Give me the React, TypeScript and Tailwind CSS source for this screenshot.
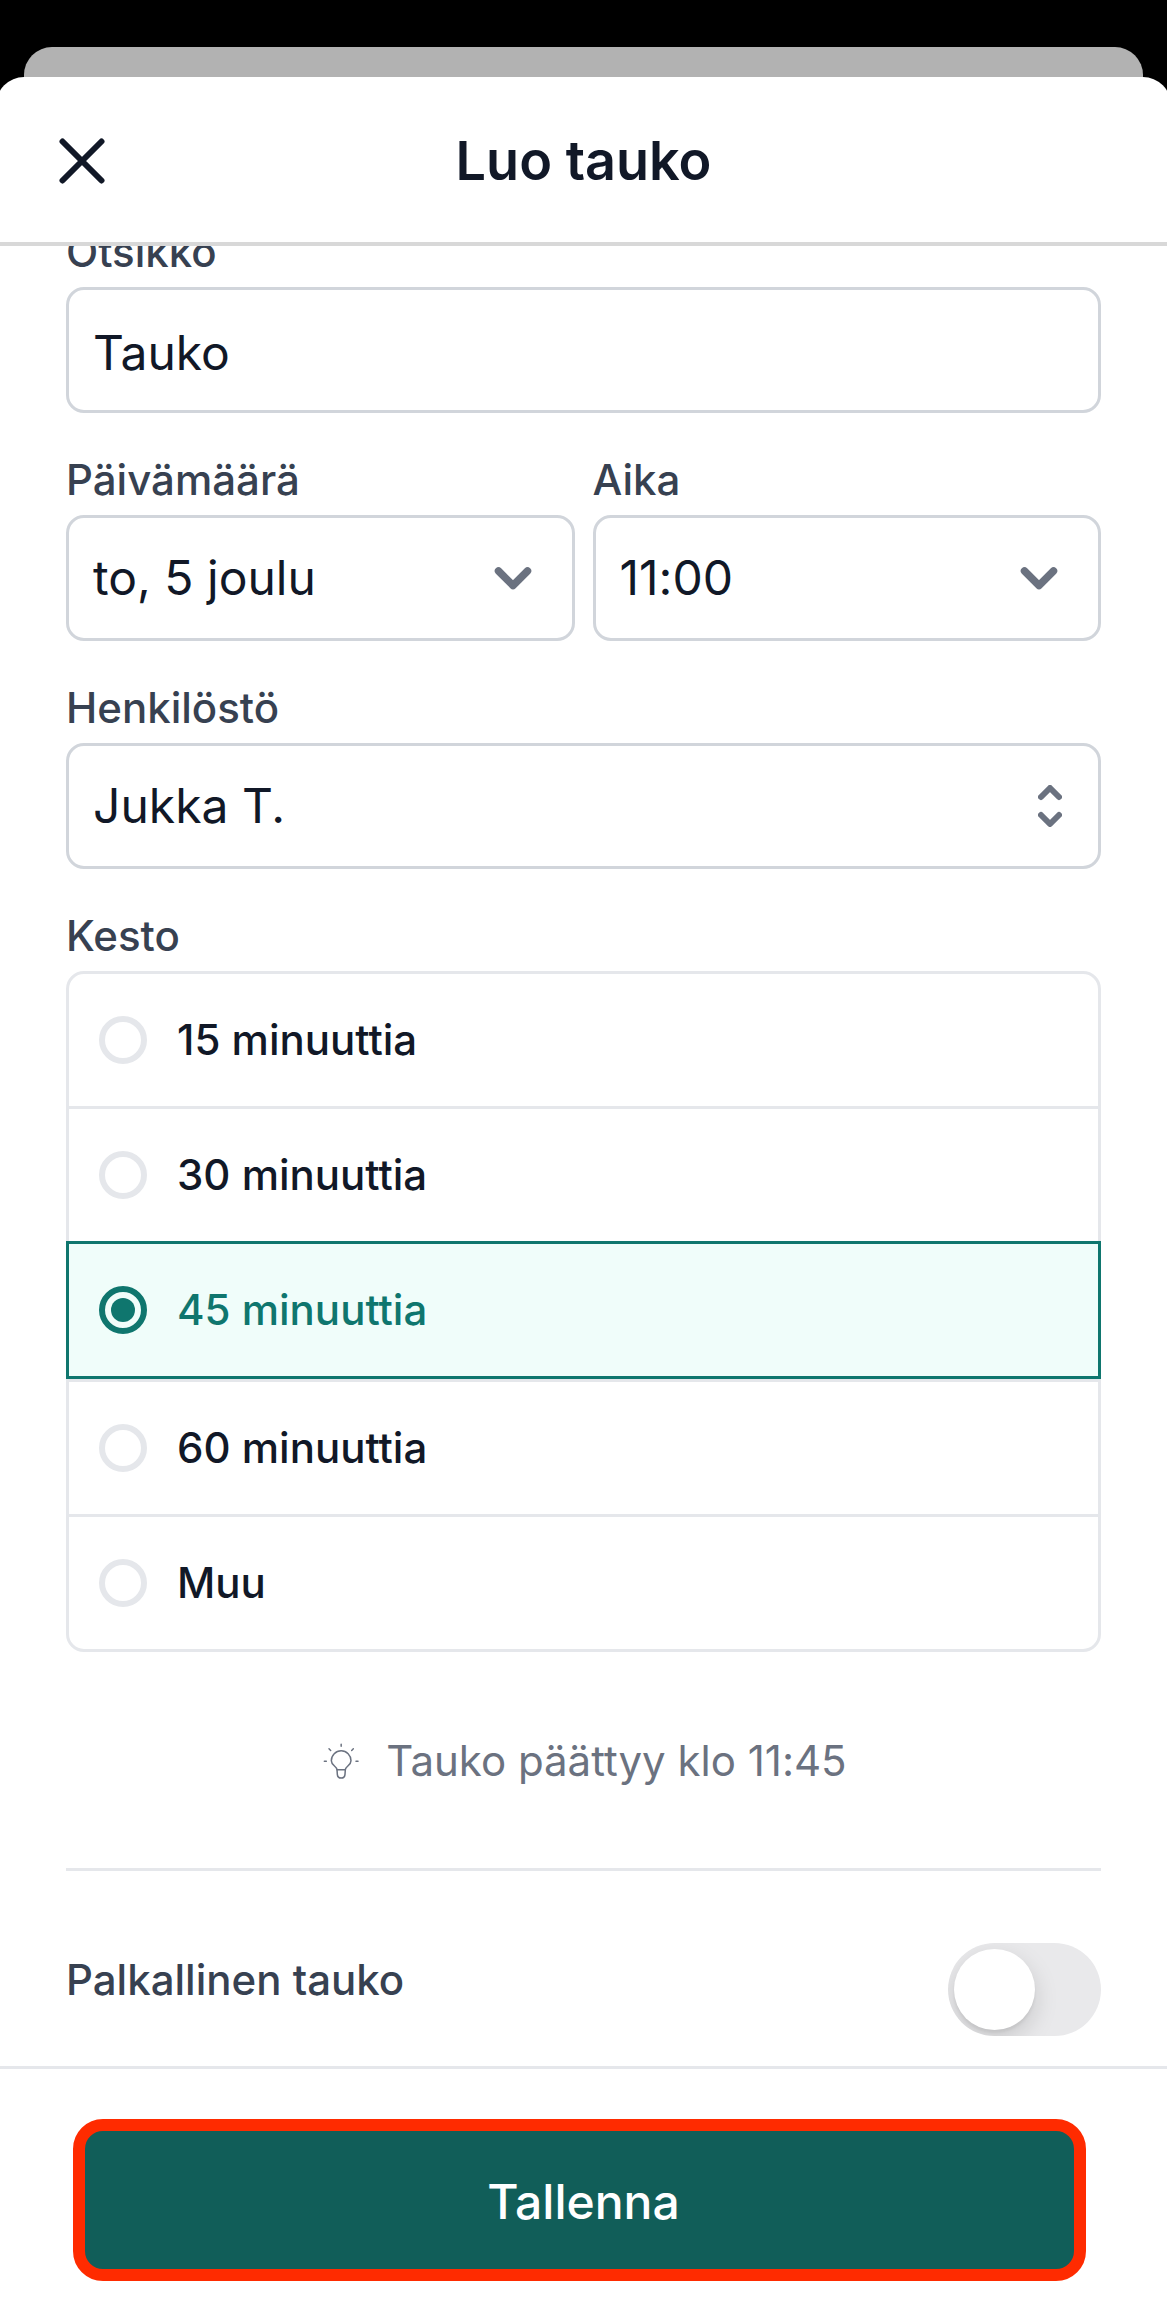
import { useState, type ReactNode } from "react";

const durations = ["15 minuuttia", "30 minuuttia", "45 minuuttia", "60 minuuttia", "Muu"];

const labelClass = "block text-[42px] leading-[62px] font-medium text-[#374151]";
const fieldClass =
  "block w-full h-[126px] appearance-none rounded-[18px] border-3 border-[#d1d5db] bg-white px-6 text-[48px] leading-[72px] text-[#111827] outline-none";

function CloseIcon() {
  return (
    <svg className="size-12" viewBox="0 0 48 48" fill="none" stroke="currentColor" strokeWidth="6" strokeLinecap="round" aria-hidden="true">
      <path d="M3.500 4.500l39 39M42.500 4.500l-39 39" />
    </svg>
  );
}

function ChevronIcon() {
  return (
    <svg className="h-6 w-[38px]" viewBox="0 0 38 24" fill="none" stroke="currentColor" strokeWidth="7.5" strokeLinecap="round" strokeLinejoin="round" aria-hidden="true">
      <path d="M4.500 5L19 19.500 33.500 5" />
    </svg>
  );
}

function UpDownIcon() {
  return (
    <svg className="h-[42px] w-6" viewBox="0 0 24 42" fill="none" stroke="currentColor" strokeWidth="6" strokeLinecap="round" strokeLinejoin="round" aria-hidden="true">
      <path d="M3 12l9-9 9 9M3 30l9 9 9-9" />
    </svg>
  );
}

function BulbIcon() {
  return (
    <svg className="size-[42px]" viewBox="0 0 126 126" fill="none" stroke="currentColor" strokeWidth="4.5" strokeLinecap="round" strokeLinejoin="round" aria-hidden="true">
      <path d="M51 89C50 79 34 76 34 62a29.500 29.500 0 0 1 59 0c0 14-16 17-17 27z" />
      <path d="M51 89l1 14c1 15 22 15 23 0l1-14" />
      <path d="M63.500 13v6M13 63.500h6M108 63.500h6M27 26.500l5 5M100 26.500l-5 5" />
    </svg>
  );
}

function SelectField({ id, label, value, icon, iconClass }: { id: string; label: string; value: string; icon: ReactNode; iconClass: string }) {
  return (
    <div>
      <label htmlFor={id} className={labelClass}>
        {label}
      </label>
      <div className="relative mt-1">
        <select id={id} defaultValue={value} className={fieldClass}>
          <option>{value}</option>
        </select>
        <span className={`pointer-events-none absolute inset-y-0 flex items-center text-[#6b7280] ${iconClass}`}>{icon}</span>
      </div>
    </div>
  );
}

export default function App() {
  const [duration, setDuration] = useState("45 minuuttia");
  const [paid, setPaid] = useState(false);

  return (
    <div className="flex min-h-screen flex-col overflow-hidden bg-black pt-[47px] font-['Inter',sans-serif] text-[#111827] [font-variant-ligatures:none]">
      <div className="mx-6 h-[30px] rounded-t-[28px] bg-[#b2b2b2]" />
      <div className="-mx-1 flex grow flex-col rounded-t-[28px] bg-white px-1">
        <header className="-mx-1 grid grid-cols-[1fr_auto_1fr] items-center border-b-4 border-[#d8d8d8] px-[63px] pt-[48px] pb-[45px]">
          <button type="button" aria-label="Sulje" className="justify-self-start">
            <CloseIcon />
          </button>
          <h1 className="text-[54px] leading-[72px] font-semibold">Luo tauko</h1>
        </header>

        <main className="grow overflow-hidden">
          <form id="break-form" className="-mt-[25px] px-[66px] pb-[30px]" onSubmit={(e) => e.preventDefault()}>
            <div className="flex flex-col gap-9">
              <div>
                <label htmlFor="title" className={labelClass}>
                  Otsikko
                </label>
                <input id="title" type="text" defaultValue="Tauko" className={`${fieldClass} mt-1 pt-1`} />
              </div>
              <div className="grid grid-cols-2 gap-[18px]">
                <SelectField id="date" label="Päivämäärä" value="to, 5 joulu" icon={<ChevronIcon />} iconClass="right-[43px]" />
                <SelectField id="time" label="Aika" value="11:00" icon={<ChevronIcon />} iconClass="right-[43px]" />
              </div>
              <SelectField id="staff" label="Henkilöstö" value="Jukka T." icon={<UpDownIcon />} iconClass="right-[39px]" />
              <fieldset>
                <legend className={labelClass}>Kesto</legend>
                <div className="mt-1">
                  {durations.map((item) => (
                    <label
                      key={item}
                      className="-mt-[3px] flex h-[138px] items-center gap-[30px] border-3 border-[#e5e7eb] px-[30px] text-[42px] leading-[60px] font-medium first:mt-0 first:rounded-t-[18px] last:rounded-b-[18px] has-checked:relative has-checked:border-[#0f766e] has-checked:bg-[#f0fdfa] has-checked:text-[#0f766e] [&:has(:checked)+label]:mt-0"
                    >
                      <input
                        type="radio"
                        name="duration"
                        checked={duration === item}
                        onChange={() => setDuration(item)}
                        className="grid size-12 shrink-0 appearance-none place-items-center rounded-full border-6 border-[#e5e7eb] before:size-6 before:rounded-full checked:border-[#0f766e] checked:before:bg-[#0f766e]"
                      />
                      {item}
                    </label>
                  ))}
                </div>
              </fieldset>
            </div>

            <p className="flex items-center justify-center gap-6 border-b-3 border-[#e5e7eb] pt-[78px] pb-[76px] text-[42px] leading-[62px] text-[#6b7280]">
              <BulbIcon />
              Tauko päättyy klo 11:45
            </p>

            <div className="flex items-start justify-between pt-[72px]">
              <label htmlFor="paid" className={`${labelClass} pt-1.5`}>
                Palkallinen tauko
              </label>
              <input
                id="paid"
                type="checkbox"
                role="switch"
                checked={paid}
                onChange={(e) => setPaid(e.target.checked)}
                className="flex h-[93px] w-[153px] appearance-none overflow-hidden rounded-full bg-[#e9e9eb] p-1.5 before:size-[81px] before:rounded-full before:bg-white before:shadow-[0_9px_24px_rgba(0,0,0,0.15),0_3px_3px_rgba(0,0,0,0.06)] checked:justify-end checked:bg-[#0f766e]"
              />
            </div>
          </form>
        </main>

        <footer className="-mx-1 border-t-3 border-[#e5e7eb] pt-[50px] pr-[85px] pb-[17px] pl-[77px]">
          <button
            type="submit"
            form="break-form"
            className="block h-[162px] w-full rounded-[30px] border-12 border-[#ff2b00] bg-[#115e59] pt-1 pl-2 text-[48px] leading-[72px] font-medium text-white"
          >
            Tallenna
          </button>
        </footer>
      </div>
    </div>
  );
}
